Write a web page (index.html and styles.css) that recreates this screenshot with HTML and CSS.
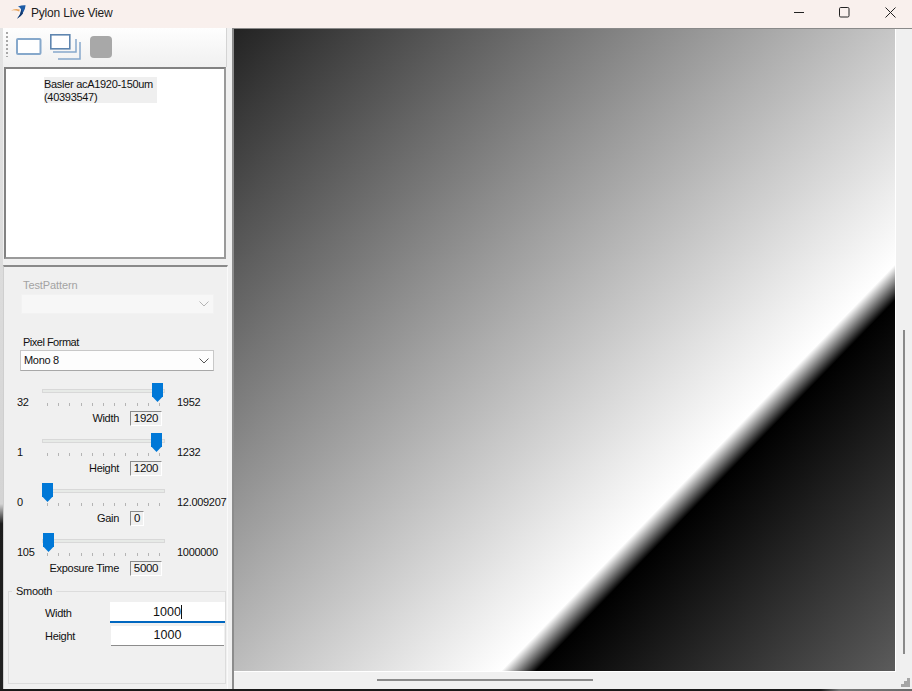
FILE: index.html
```html
<!DOCTYPE html>
<html lang="en">
<head>
<meta charset="utf-8">
<title>Pylon Live View</title>
<link rel="stylesheet" href="styles.css">
</head>
<body>
<div class="window">
  <header class="titlebar">
    <svg class="logo" width="16" height="16" viewBox="0 0 16 16">
      <path d="M0 5.6 Q4 3 8.8 4.6 L8.2 6.6 Q4 4.8 0 5.6Z" fill="#e8a45c"/>
      <path d="M7 1.5 Q11 0 14.6 0.3 Q14 8 6 13.8 Q10.5 8 10 4.2 Q9 2 7 1.5Z" fill="#1d5ba6"/>
      <path d="M10 4.2 Q10.5 8 6 13.8 Q10 11.5 12 8.4 Q11.6 6 10 4.2Z" fill="#123a70"/>
    </svg>
    <span class="title">Pylon Live View</span>
    <div class="controls">
      <svg class="ctl" width="10" height="10" viewBox="0 0 10 10"><path d="M0 5.5H10" stroke="#222" fill="none"/></svg>
      <svg class="ctl" width="11" height="11" viewBox="0 0 11 11"><rect x="0.5" y="0.5" width="9.5" height="9.5" rx="1.2" stroke="#222" fill="none"/></svg>
      <svg class="ctl" width="11" height="11" viewBox="0 0 11 11"><path d="M0.5 0.5L10.5 10.5M10.5 0.5L0.5 10.5" stroke="#222" fill="none"/></svg>
    </div>
  </header>
  <div class="main">
    <div class="edge"></div>
    <aside class="side">
      <div class="toolbar">
        <div class="grip"></div>
        <svg class="tool-icons" width="98" height="28" viewBox="0 0 98 28">
          <rect x="2" y="7" width="23.5" height="15" rx="1" fill="#fff" stroke="#86a8cb" stroke-width="2"/>
          <path d="M38 20H61V7M43 27H65V10" fill="none" stroke="#86a8cb" stroke-width="1.5"/>
          <rect x="35.8" y="2.8" width="19" height="14" fill="#fff" stroke="#5f86b0" stroke-width="1.6"/>
          <rect x="75" y="4" width="22" height="22" rx="4" fill="#a8a8a8"/>
        </svg>
      </div>
      <div class="devices">
        <div class="device">Basler acA1920-150um<br>(40393547)</div>
      </div>
      <div class="params">
        <label class="field-label disabled">TestPattern</label>
        <div class="combo combo-off">
          <svg width="10" height="6" viewBox="0 0 10 6"><path d="M0.5 0.5L5 5L9.5 0.5" fill="none" stroke="#b4b4b4"/></svg>
        </div>
        <label class="field-label second">Pixel Format</label>
        <div class="combo combo-on">
          <span>Mono 8</span>
          <svg width="10" height="6" viewBox="0 0 10 6"><path d="M0.5 0.5L5 5L9.5 0.5" fill="none" stroke="#555"/></svg>
        </div>

        <div class="slider first">
          <span class="lim-min">32</span>
          <div class="track-area">
            <div class="track"></div>
            <div class="ticks"><i></i><i></i><i></i><i></i><i></i><i></i><i></i><i></i><i></i><i></i><i></i></div>
            <div class="thumb" style="left:110px"></div>
          </div>
          <span class="lim-max">1952</span>
          <span class="val-label">Width</span>
          <span class="val">1920</span>
        </div>
        <div class="slider">
          <span class="lim-min">1</span>
          <div class="track-area">
            <div class="track"></div>
            <div class="ticks"><i></i><i></i><i></i><i></i><i></i><i></i><i></i><i></i><i></i><i></i><i></i></div>
            <div class="thumb" style="left:109px"></div>
          </div>
          <span class="lim-max">1232</span>
          <span class="val-label">Height</span>
          <span class="val">1200</span>
        </div>
        <div class="slider">
          <span class="lim-min">0</span>
          <div class="track-area">
            <div class="track"></div>
            <div class="ticks"><i></i><i></i><i></i><i></i><i></i><i></i><i></i><i></i><i></i><i></i><i></i></div>
            <div class="thumb" style="left:0px"></div>
          </div>
          <span class="lim-max">12.009207</span>
          <span class="val-label">Gain</span>
          <span class="val val-short">0</span>
        </div>
        <div class="slider">
          <span class="lim-min">105</span>
          <div class="track-area">
            <div class="track"></div>
            <div class="ticks"><i></i><i></i><i></i><i></i><i></i><i></i><i></i><i></i><i></i><i></i><i></i></div>
            <div class="thumb" style="left:1px"></div>
          </div>
          <span class="lim-max">1000000</span>
          <span class="val-label">Exposure Time</span>
          <span class="val">5000</span>
        </div>

        <fieldset class="smooth">
          <legend>Smooth</legend>
          <div class="smooth-row">
            <span class="smooth-label">Width</span>
            <div class="smooth-input focused"><span>1000</span><i class="caret"></i></div>
          </div>
          <div class="smooth-row">
            <span class="smooth-label">Height</span>
            <div class="smooth-input plain"><span>1000</span></div>
          </div>
        </fieldset>
      </div>
    </aside>
    <section class="viewer">
      <div class="view-row">
        <div class="picture"></div>
        <div class="vscroll"><div class="vthumb"></div></div>
      </div>
      <div class="hscroll">
        <div class="hthumb"></div>
        <svg class="resize" width="9" height="9" viewBox="0 0 9 9">
          <path d="M6 0h3v3h-3zM3 3h3v3h-3zM6 3h3v3h-3zM0 6h3v3h-3zM3 6h3v3h-3zM6 6h3v3h-3z" fill="#a6a6a6"/>
        </svg>
      </div>
    </section>
  </div>
  <div class="strip"></div>
</div>
</body>
</html>
```

FILE: styles.css
```css
* { box-sizing: border-box; }
html, body { margin: 0; padding: 0; }
body {
  width: 912px;
  height: 691px;
  overflow: hidden;
  font-family: "Liberation Sans", Arial, sans-serif;
  font-size: 11px;
  letter-spacing: -0.3px;
  color: #111;
  background: #f0f0f0;
}
.window { width: 912px; height: 691px; display: flex; flex-direction: column; }

/* title bar */
.titlebar {
  height: 28px;
  flex: none;
  display: flex;
  align-items: center;
  background: #f9f0ed;
  padding-left: 11px;
}
.logo { margin-top: -3px; }
.title { margin-left: 4px; font-size: 12px; letter-spacing: -0.2px; color: #1c1c1c; margin-top: -2px; }
.controls { margin-left: auto; display: flex; align-items: center; padding-right: 16px; margin-top: -4px; }
.ctl { display: block; }
.ctl + .ctl { margin-left: 35px; }

/* layout */
.main { flex: 1; min-height: 0; display: flex; }
.edge {
  width: 3px;
  flex: none;
  background: linear-gradient(#e4e4e4 0, #d4d4d4 72%, #1c1c1c 75%, #222 100%);
}
.side { width: 229px; flex: none; display: flex; flex-direction: column; background: #f0f0f0; }

/* toolbar */
.toolbar {
  width: 224px;
  height: 39px;
  flex: none;
  display: flex;
  align-items: flex-start;
  padding-top: 4px;
  background: linear-gradient(#fefefe, #f0f0f0);
  border-right: 1px solid #d4d4d4;
}
.grip {
  width: 2px;
  height: 25px;
  margin-left: 3px;
  background: repeating-linear-gradient(#a8a8a8 0 2px, transparent 2px 4px);
}
.tool-icons { margin-left: 7px; display: block; }

/* device list */
.devices {
  width: 222px;
  height: 192px;
  flex: none;
  margin-left: 1px;
  background: #fff;
  border: 2px solid #828282;
  border-right-color: #9a9a9a;
  border-bottom-color: #9a9a9a;
  padding: 8px 0 0 38px;
}
.device {
  width: 113px;
  height: 26px;
  line-height: 13px;
  padding-top: 1px;
  background: #efefef;
  color: #111;
  white-space: nowrap;
}

/* parameters */
.params {
  flex: 1;
  min-height: 0;
  width: 225px;
  margin-top: 6px;
  border-top: 2px solid #8a8a8a;
  border-left: 1px solid #cfcfcf;
  border-right: 1px solid #fafafa;
  background: #f0f0f0;
  padding-top: 12px;
  display: flex;
  flex-direction: column;
}
.field-label { display: block; height: 13px; line-height: 13px; margin-left: 19px; }
.field-label.disabled { color: #a3a3a3; letter-spacing: -0.1px; }
.field-label.second { margin-top: 22px; letter-spacing: -0.5px; }
.combo {
  display: flex;
  align-items: center;
  justify-content: space-between;
  padding: 0 3px 0 3px;
  line-height: 1;
}
.combo svg { display: block; margin-right: 1px; }
.combo-off {
  height: 20px;
  width: 193px;
  margin: 2px 0 0 17px;
  background: #f7f7f7;
  border: 1px solid #f2f2f2;
  justify-content: flex-end;
}
.combo-on {
  height: 21px;
  width: 194px;
  margin: 1px 0 0 16px;
  background: #fdfdfd;
  border: 1px solid #c8c8c8;
  border-bottom-color: #a8a8a8;
}

/* sliders */
.slider {
  display: grid;
  grid-template-columns: 25px 123px 12px auto;
  grid-template-rows: 24px 15px;
  row-gap: 4px;
  height: 50px;
  flex: none;
  margin-left: 13px;
}
.slider.first { margin-top: 12px; }
.lim-min, .lim-max { line-height: 13px; margin-top: 13px; white-space: nowrap; }
.lim-max { grid-column: 4; }
.track-area { position: relative; grid-column: 2; }
.track {
  position: absolute;
  left: 0; right: 0; top: 6px;
  height: 4px;
  background: #e7eae7;
  border: 1px solid #d8d8d8;
}
.ticks {
  position: absolute;
  left: 5px; right: 5px; top: 20px;
  display: flex;
  justify-content: space-between;
}
.ticks i { width: 1px; height: 3px; background: #b4b4b4; display: block; }
.thumb {
  position: absolute;
  top: 0;
  width: 11px;
  height: 19px;
  background: #0078d7;
  clip-path: polygon(0 0, 100% 0, 100% 70%, 50% 100%, 0 70%);
}
.val-label {
  grid-column: 1 / 3;
  grid-row: 2;
  justify-self: end;
  margin-right: 46px;
  line-height: 14px;
  white-space: nowrap;
}
.val {
  grid-column: 2;
  grid-row: 2;
  justify-self: start;
  margin-left: 88px;
  width: 32px;
  height: 15px;
  line-height: 13px;
  text-align: center;
  border: 1px solid #8c8c8c;
  border-right-color: #fff;
  border-bottom-color: #fff;
  font-size: 11.5px;
}
.val-short { width: 14px; }

/* smooth group */
.smooth {
  margin: 2px 0 0 4px;
  width: 218px;
  height: 99px;
  flex: none;
  padding: 3px 0 0 0;
  border: 1px solid #dcdcdc;
  min-width: 0;
}
.smooth legend { margin-left: 3px; padding: 0 4px; line-height: 13px; height: 13px; }
.smooth-row { display: flex; align-items: center; height: 23px; }
.smooth-label { width: 101px; padding-left: 36px; flex: none; }
.smooth-input {
  background: #fff;
  font-size: 12.5px;
  letter-spacing: 0;
  display: flex;
  justify-content: center;
  align-items: center;
  flex: none;
}
.focused { width: 115px; height: 21px; border-bottom: 2px solid #0067c0; }
.plain { width: 113px; height: 20px; margin-left: 1px; border-bottom: 1px solid #8c8c8c; }
.caret { width: 1px; height: 14px; background: #111; display: block; }

/* viewer */
.viewer {
  flex: 1;
  min-width: 0;
  display: flex;
  flex-direction: column;
  border-top: 1px solid #8a8a8a;
  border-left: 2px solid #8c8c8c;
}
.view-row { height: 643px; flex: none; display: flex; }
.picture {
  width: 662px;
  height: 643px;
  flex: none;
  border-right: 1px solid #fff;
  border-bottom: 1px solid #fff;
  background: linear-gradient(134.1deg, #232323 0%, #fff 69.3%, #000 72%, #5c5c5c 100%);
}
.vscroll { flex: 1; padding: 301px 0 0 7px; background: #f0f0f0; }
.vthumb { width: 2px; height: 324px; background: #8a8a8a; }
.hscroll {
  flex: 1;
  display: flex;
  align-items: flex-start;
  background: #f0f0f0;
  padding: 7px 2px 0 143px;
}
.hthumb { width: 216px; height: 2px; background: #8a8a8a; }
.resize { margin-left: auto; margin-top: -1px; display: block; }

.strip { height: 2px; flex: none; background: linear-gradient(90deg, #1a1a1a 0 90%, #777 92%, #6a6a6a 100%); }
```
